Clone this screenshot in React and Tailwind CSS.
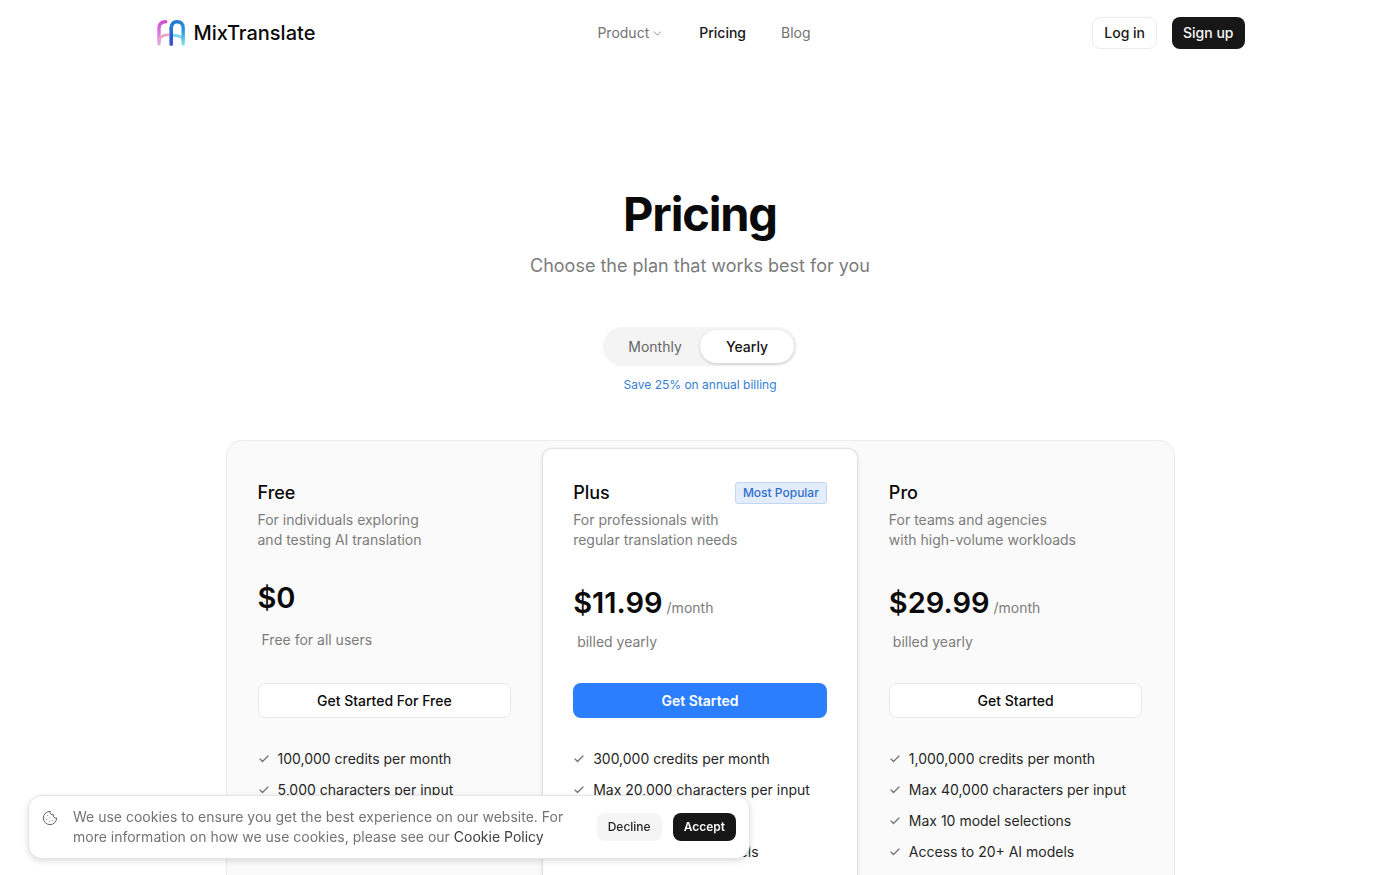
import { Check, ChevronDown, Cookie } from "lucide-react";

const plans = [
  {
    name: "Free",
    lines: ["For individuals exploring", "and testing AI translation"],
    price: "$0",
    note: "Free for all users",
    cta: "Get Started For Free",
    features: [
      "100,000 credits per month",
      "5,000 characters per input",
      "Max 3 AI models",
      "Access to basic AI models",
    ],
  },
  {
    name: "Plus",
    badge: "Most Popular",
    lines: ["For professionals with", "regular translation needs"],
    price: "$11.99",
    period: "/month",
    note: "billed yearly",
    cta: "Get Started",
    highlighted: true,
    features: [
      "300,000 credits per month",
      "Max 20,000 characters per input",
      "Max 5 AI models",
      "Access to 20+ AI models",
    ],
  },
  {
    name: "Pro",
    lines: ["For teams and agencies", "with high-volume workloads"],
    price: "$29.99",
    period: "/month",
    note: "billed yearly",
    cta: "Get Started",
    features: [
      "1,000,000 credits per month",
      "Max 40,000 characters per input",
      "Max 10 model selections",
      "Access to 20+ AI models",
    ],
  },
];

function Logo() {
  return (
    <svg width="30" height="28" viewBox="0 0 30 28" fill="none" strokeLinecap="round" strokeWidth="3.4" aria-hidden="true">
      <defs>
        <linearGradient id="left" x1="6" y1="2" x2="3" y2="27" gradientUnits="userSpaceOnUse">
          <stop stopColor="#cf4fd0" />
          <stop offset="0.5" stopColor="#d97be2" />
          <stop offset="1" stopColor="#dfb4e4" />
        </linearGradient>
        <linearGradient id="right" x1="15" y1="4" x2="28" y2="26" gradientUnits="userSpaceOnUse">
          <stop stopColor="#2378cf" />
          <stop offset="0.5" stopColor="#2b93dd" />
          <stop offset="1" stopColor="#86e6ea" />
        </linearGradient>
        <linearGradient id="stem" x1="15" y1="8" x2="15" y2="27" gradientUnits="userSpaceOnUse">
          <stop stopColor="#2680d2" />
          <stop offset="0.6" stopColor="#2a55d2" />
          <stop offset="1" stopColor="#4a55cf" />
        </linearGradient>
      </defs>
      <path d="M3 25V9.500C3 5 5.500 2.700 9.800 2.700" stroke="url(#left)" />
      <path d="M3.500 20.500C4.500 17 7 15.800 12 15.800" stroke="#f2a3c4" strokeWidth="2.800" />
      <path d="M17.500 16.300C21.500 16.300 25 17 27 20" stroke="#7bd3ee" strokeWidth="2.800" />
      <path d="M15.200 10C15.200 5 17 2.700 21 2.700C25.300 2.700 27.200 5 27.200 9.500V25" stroke="url(#right)" />
      <path d="M15.200 9V25.200" stroke="url(#stem)" strokeWidth="3.600" />
    </svg>
  );
}

function Header() {
  return (
    <header className="mx-auto flex h-[66px] w-full max-w-[1089px] items-center justify-between">
      <a href="#home" className="flex flex-1 items-center gap-2 text-xl font-medium text-[#0a0a0a]">
        <Logo />
        MixTranslate
      </a>
      <nav className="ml-2 flex items-center gap-[35px] text-sm text-[#737373]">
        <button type="button" className="flex items-center gap-0.5">
          Product
          <ChevronDown size={13} strokeWidth={1.5} className="mt-px" />
        </button>
        <a href="#pricing" className="font-medium text-[#171717]">Pricing</a>
        <a href="#blog">Blog</a>
      </nav>
      <div className="flex flex-1 justify-end gap-[15px] text-sm font-medium">
        <a href="#login" className="flex h-8 items-center rounded-lg border border-[#ebebeb] bg-white px-[11px] text-[#171717]">
          Log in
        </a>
        <a href="#signup" className="flex h-8 items-center rounded-lg bg-[#171717] px-[11px] text-[#fafafa]">
          Sign up
        </a>
      </div>
    </header>
  );
}

function Plan({ plan }) {
  return (
    <article
      className={
        plan.highlighted
          ? "mt-[7px] rounded-t-[10px] border border-b-0 border-[#e2e2e2] bg-white px-[30px] pt-[33px] pb-20 shadow-[0_1px_3px_rgba(0,0,0,0.14)]"
          : "px-[31px] pt-[41px] pb-20"
      }
    >
      <div className="flex h-[22px] items-center justify-between">
        <h2 className="text-lg font-medium text-[#0a0a0a]">{plan.name}</h2>
        {plan.badge && (
          <span className="flex h-[22px] items-center rounded-[3px] border border-[#c3d5f3] bg-[#e4edfb] px-[7px] text-xs font-medium text-[#2f6fce]">
            {plan.badge}
          </span>
        )}
      </div>
      <p className="mt-[6px] text-sm leading-5 text-[#7c7c7c]">
        {plan.lines[0]}
        <br />
        {plan.lines[1]}
      </p>
      <div className="mt-6 flex h-[109px] flex-col">
        <p className={plan.period ? "mt-2 text-[29px] leading-[42px] font-semibold text-[#0a0a0a]" : "mt-1 text-[29px] leading-10 font-semibold text-[#0a0a0a]"}>
          {plan.price}
          {plan.period && <span className="ml-1 text-sm font-normal text-[#7c7c7c]">{plan.period}</span>}
        </p>
        <p className={plan.period ? "mt-2 ml-1 text-sm leading-5 text-[#7c7c7c]" : "mt-3 ml-1 text-sm leading-5 text-[#7c7c7c]"}>
          {plan.note}
        </p>
      </div>
      <button
        type="button"
        className={
          plan.highlighted
            ? "h-[35px] w-full rounded-lg bg-[#2b7fff] text-sm font-semibold text-white"
            : "h-[35px] w-full rounded-lg border border-[#e8e8e8] bg-white text-sm font-medium text-[#0a0a0a]"
        }
      >
        {plan.cta}
      </button>
      <ul className="mt-[31px] flex flex-col gap-[11px] text-sm leading-5 text-[#262626]">
        {plan.features.map((f) => (
          <li key={f} className="flex items-center gap-2">
            <Check size={12} strokeWidth={2.5} className="text-[#737373]" />
            {f}
          </li>
        ))}
      </ul>
    </article>
  );
}

function CookieBanner() {
  return (
    <section
      aria-label="Cookie notice"
      className="fixed bottom-4 left-7 flex w-full max-w-[722px] items-center rounded-[14px] border border-[#e5e5e5] bg-white px-[13px] py-[11px] shadow-[0_2px_6px_rgba(0,0,0,0.14)]"
    >
      <Cookie size={16} strokeWidth={1.5} className="mt-[3px] shrink-0 self-start text-[#666666]" />
      <p className="ml-[15px] max-w-[500px] text-sm leading-5 text-[#737373]">
        We use cookies to ensure you get the best experience on our website. For more information on how we use cookies,
        please see our{" "}
        <a href="#cookies" className="text-[#404040]">Cookie Policy</a>
      </p>
      <div className="ml-auto flex gap-[11px] pl-4 text-xs">
        <button type="button" className="h-7 rounded-lg bg-[#f5f5f5] px-[11px] font-medium text-[#262626]">Decline</button>
        <button type="button" className="h-7 rounded-lg bg-[#171717] px-[11px] font-semibold text-[#fafafa]">Accept</button>
      </div>
    </section>
  );
}

export default function App() {
  return (
    <div className="min-h-screen bg-white font-['Inter',sans-serif] text-[#0a0a0a]">
      <Header />
      <main className="flex flex-col items-center pt-[120px]">
        <h1 className="text-[47px] leading-[56px] font-bold tracking-tight">Pricing</h1>
        <p className="mt-[10px] text-lg leading-7 text-[#7c7c7c]">Choose the plan that works best for you</p>
        <div className="mt-[47px] flex h-[39px] rounded-full bg-[#f4f4f4] p-[3px] text-sm">
          <button type="button" aria-pressed="false" className="w-[94px] rounded-full pl-1 text-[#666666]">Monthly</button>
          <button type="button" aria-pressed="true" className="w-[94px] rounded-full bg-white font-medium text-[#171717] shadow-[0_1px_3px_rgba(0,0,0,0.18)]">
            Yearly
          </button>
        </div>
        <p className="mt-[10px] text-xs leading-[18px] text-[#3580d2]">Save 25% on annual billing</p>
        <div className="mt-[46px] grid w-full max-w-[949px] grid-cols-3 rounded-2xl border border-[#ebebeb] bg-[#fafafa]">
          {plans.map((p) => (
            <Plan key={p.name} plan={p} />
          ))}
        </div>
      </main>
      <CookieBanner />
    </div>
  );
}
